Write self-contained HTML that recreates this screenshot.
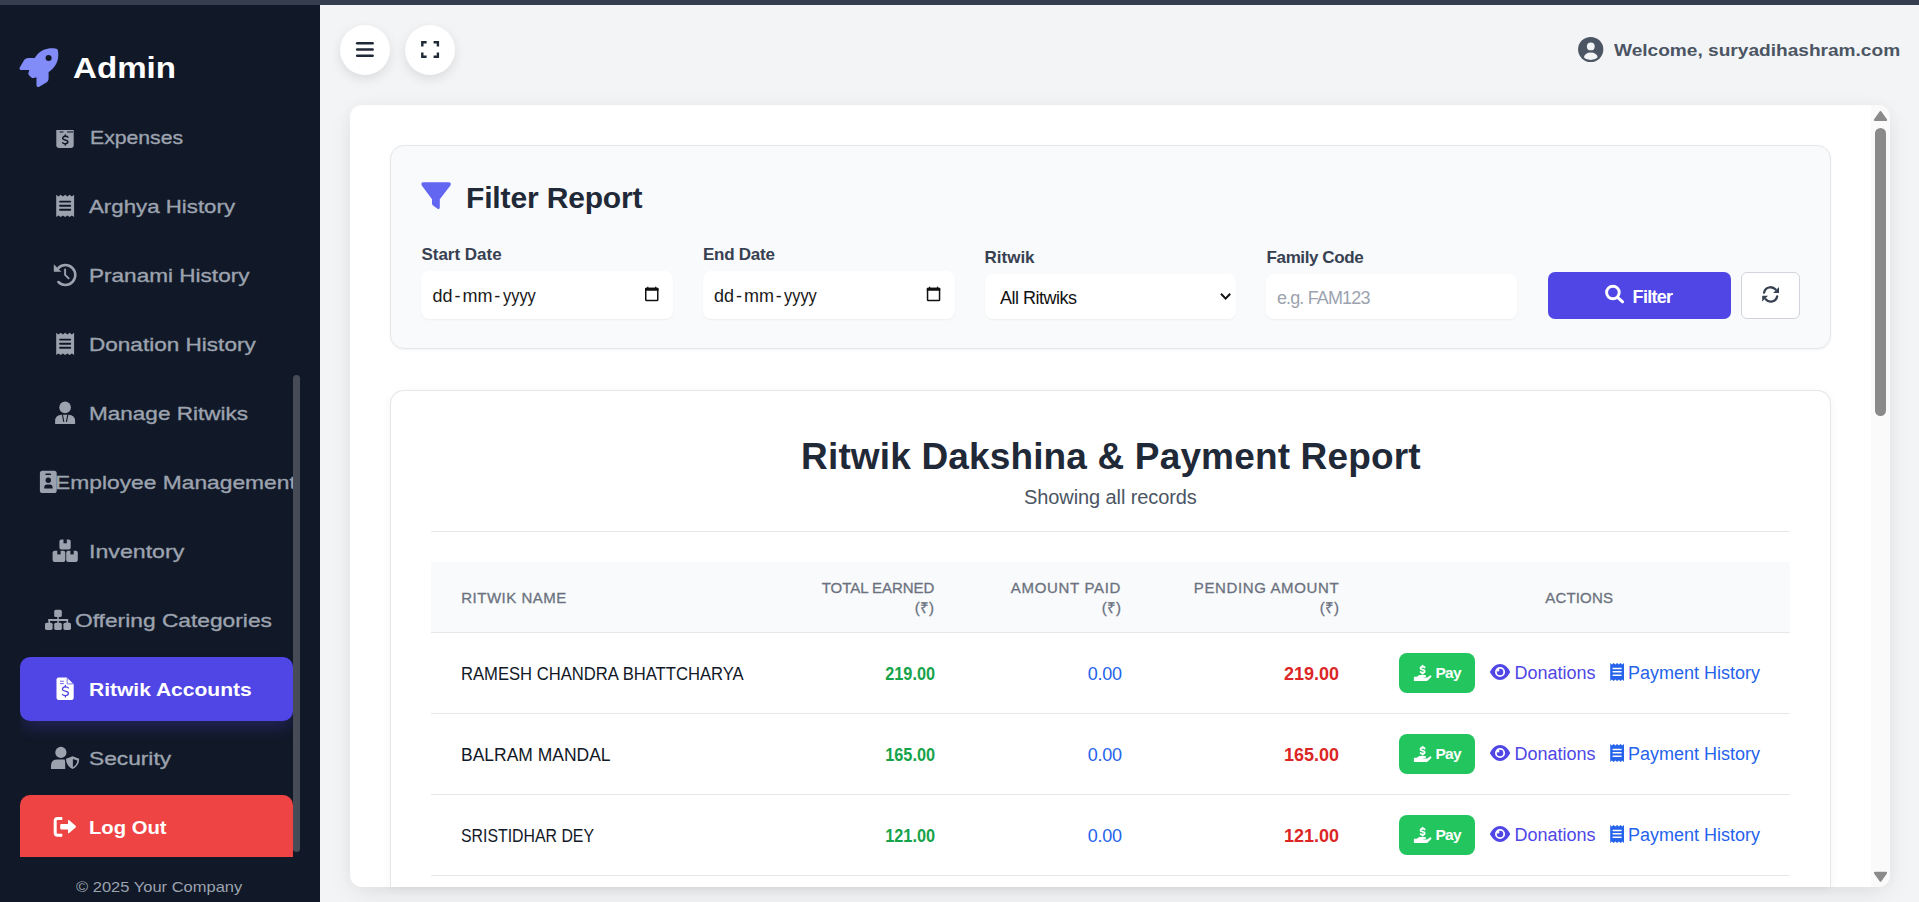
<!DOCTYPE html>
<html><head><meta charset="utf-8"><style>
html,body{margin:0;padding:0;width:1919px;height:902px;overflow:hidden;background:#f3f4f6}
body{position:relative;font-family:"Liberation Sans",sans-serif}
.t{position:absolute;white-space:nowrap}
.circ{position:absolute;width:50px;height:50px;border-radius:50%;background:#fff;box-shadow:0 4px 12px rgba(0,0,0,.10)}
</style></head><body>
<div style="position:absolute;left:0;top:0;width:1919px;height:5px;background:#353d4e"></div>
<div style="position:absolute;left:0;top:5px;width:320px;height:897px;background:#111827"></div>
<div style="position:absolute;left:320px;top:5px;width:1599px;height:897px;background:#f3f4f6"></div>
<div class="t" style="left:72.6px;top:52.61px;font-size:30px;line-height:30px;font-weight:700;color:#fff;letter-spacing:0px;transform:scaleX(1.104);transform-origin:0 0;">Admin</div>

<div class="t" style="left:89.6px;top:128.12px;font-size:19px;line-height:19px;font-weight:400;color:#9ca3af;letter-spacing:0px;-webkit-text-stroke:0.35px #9ca3af;transform:scaleX(1.116);transform-origin:0 0;">Expenses</div>

<div class="t" style="left:89.4px;top:197.12px;font-size:19px;line-height:19px;font-weight:400;color:#9ca3af;letter-spacing:0px;-webkit-text-stroke:0.35px #9ca3af;transform:scaleX(1.172);transform-origin:0 0;">Arghya History</div>

<div class="t" style="left:89.0px;top:266.12px;font-size:19px;line-height:19px;font-weight:400;color:#9ca3af;letter-spacing:0px;-webkit-text-stroke:0.35px #9ca3af;transform:scaleX(1.1875);transform-origin:0 0;">Pranami History</div>

<div class="t" style="left:89.0px;top:335.12px;font-size:19px;line-height:19px;font-weight:400;color:#9ca3af;letter-spacing:0px;-webkit-text-stroke:0.35px #9ca3af;transform:scaleX(1.187);transform-origin:0 0;">Donation History</div>

<div class="t" style="left:89.0px;top:404.12px;font-size:19px;line-height:19px;font-weight:400;color:#9ca3af;letter-spacing:0px;-webkit-text-stroke:0.35px #9ca3af;transform:scaleX(1.186);transform-origin:0 0;">Manage Ritwiks</div>

<div style="position:absolute;left:0;top:460px;width:293px;height:45px;overflow:hidden">
<div class="t" style="left:55.3px;top:13.12px;font-size:19px;line-height:19px;font-weight:400;color:#9ca3af;letter-spacing:0px;-webkit-text-stroke:0.35px #9ca3af;transform:scaleX(1.2);transform-origin:0 0;">Employee Management</div>

</div>
<div class="t" style="left:89.2px;top:542.12px;font-size:19px;line-height:19px;font-weight:400;color:#9ca3af;letter-spacing:0px;-webkit-text-stroke:0.35px #9ca3af;transform:scaleX(1.219);transform-origin:0 0;">Inventory</div>

<div class="t" style="left:75.0px;top:611.12px;font-size:19px;line-height:19px;font-weight:400;color:#9ca3af;letter-spacing:0px;-webkit-text-stroke:0.35px #9ca3af;transform:scaleX(1.198);transform-origin:0 0;">Offering Categories</div>

<div class="t" style="left:88.8px;top:749.12px;font-size:19px;line-height:19px;font-weight:400;color:#9ca3af;letter-spacing:0px;-webkit-text-stroke:0.35px #9ca3af;transform:scaleX(1.196);transform-origin:0 0;">Security</div>

<div style="position:absolute;left:20px;top:100px;width:273px;height:757px;overflow:hidden"><div style="position:absolute;left:0;top:557px;width:273px;height:64px;background:#4f46e5;border-radius:10px;box-shadow:0 10px 15px -3px rgba(79,70,229,.25)"></div></div>
<div class="t" style="left:89px;top:679.92px;font-size:19px;line-height:19px;font-weight:700;color:#fff;letter-spacing:0px;transform:scaleX(1.106);transform-origin:0 0;">Ritwik Accounts</div>

<div style="position:absolute;left:20px;top:795px;width:273px;height:62px;overflow:hidden"><div style="width:273px;height:80px;background:#ef4444;border-radius:10px"></div></div>
<div class="t" style="left:89px;top:817.92px;font-size:19px;line-height:19px;font-weight:700;color:#fff;letter-spacing:0px;transform:scaleX(1.065);transform-origin:0 0;">Log Out</div>

<div style="position:absolute;left:293px;top:375px;width:7px;height:477px;background:#464b56;border-radius:4px"></div>
<div class="t" style="left:75.8px;top:879.00px;font-size:15px;line-height:15px;font-weight:400;color:#9ca3af;letter-spacing:0px;transform:scaleX(1.1);transform-origin:0 0;">&copy; 2025 Your Company</div>

<div class="circ" style="left:340px;top:25px"></div>
<div class="circ" style="left:405px;top:25px"></div>
<div class="t" style="left:1613.6px;top:41.81px;font-size:17px;line-height:17px;font-weight:700;color:#4b5563;letter-spacing:0px;transform:scaleX(1.123);transform-origin:0 0;">Welcome, suryadihashram.com</div>

<div style="position:absolute;left:350px;top:105px;width:1540px;height:782px;background:#fff;border-radius:12px;box-shadow:0 8px 28px -4px rgba(0,0,0,.09),0 0 14px rgba(0,0,0,.03);overflow:hidden">
<div style="position:absolute;left:1521px;top:0;width:19px;height:782px;background:#fafafa"></div>
<div style="position:absolute;left:1525px;top:23px;width:11px;height:288px;background:#8a8a8a;border-radius:6px"></div>
</div>
<div style="position:absolute;left:390px;top:145px;width:1439px;height:202px;background:#f9fafb;border:1px solid #e5e7eb;border-radius:14px;box-shadow:0 1px 3px rgba(0,0,0,.05)"></div>
<div class="t" style="left:466px;top:182.80px;font-size:30px;line-height:30px;font-weight:700;color:#1f2937;letter-spacing:-0.15px;">Filter Report</div>

<div class="t" style="left:421.4px;top:246.41px;font-size:17px;line-height:17px;font-weight:700;color:#374151;letter-spacing:0px;">Start Date</div>

<div class="t" style="left:703px;top:246.41px;font-size:17px;line-height:17px;font-weight:700;color:#374151;letter-spacing:-0.25px;">End Date</div>

<div class="t" style="left:984.5px;top:248.51px;font-size:17px;line-height:17px;font-weight:700;color:#374151;letter-spacing:0px;">Ritwik</div>

<div class="t" style="left:1266.6px;top:248.51px;font-size:17px;line-height:17px;font-weight:700;color:#374151;letter-spacing:-0.4px;">Family Code</div>

<div style="position:absolute;background:#fff;border-radius:8px;box-shadow:0 1px 2px rgba(0,0,0,.05);left:421px;top:271px;width:252px;height:48px"></div>
<div style="position:absolute;background:#fff;border-radius:8px;box-shadow:0 1px 2px rgba(0,0,0,.05);left:703px;top:271px;width:252px;height:48px"></div>
<div style="position:absolute;background:#fff;border-radius:8px;box-shadow:0 1px 2px rgba(0,0,0,.05);left:985px;top:274px;width:251px;height:45px"></div>
<div style="position:absolute;background:#fff;border-radius:8px;box-shadow:0 1px 2px rgba(0,0,0,.05);left:1266px;top:274px;width:251px;height:45px"></div>
<div class="t" style="left:432.6px;top:286.66px;font-size:18px;line-height:18px;font-weight:400;color:#1a1a1a;letter-spacing:0px;">dd</div>

<div class="t" style="left:454.6px;top:286.66px;font-size:18px;line-height:18px;font-weight:400;color:#1a1a1a;letter-spacing:0px;">-</div>

<div class="t" style="left:462.5px;top:286.66px;font-size:18px;line-height:18px;font-weight:400;color:#1a1a1a;letter-spacing:0px;">mm</div>

<div class="t" style="left:494.3px;top:286.66px;font-size:18px;line-height:18px;font-weight:400;color:#1a1a1a;letter-spacing:0px;">-</div>

<div class="t" style="left:502.8px;top:286.66px;font-size:18px;line-height:18px;font-weight:400;color:#1a1a1a;letter-spacing:0px;transform:scaleX(0.91);transform-origin:0 0;">yyyy</div>

<div class="t" style="left:714.1px;top:286.66px;font-size:18px;line-height:18px;font-weight:400;color:#1a1a1a;letter-spacing:0px;">dd</div>

<div class="t" style="left:736.1px;top:286.66px;font-size:18px;line-height:18px;font-weight:400;color:#1a1a1a;letter-spacing:0px;">-</div>

<div class="t" style="left:744.0px;top:286.66px;font-size:18px;line-height:18px;font-weight:400;color:#1a1a1a;letter-spacing:0px;">mm</div>

<div class="t" style="left:775.8px;top:286.66px;font-size:18px;line-height:18px;font-weight:400;color:#1a1a1a;letter-spacing:0px;">-</div>

<div class="t" style="left:784.3px;top:286.66px;font-size:18px;line-height:18px;font-weight:400;color:#1a1a1a;letter-spacing:0px;transform:scaleX(0.91);transform-origin:0 0;">yyyy</div>

<div class="t" style="left:1000px;top:288.51px;font-size:18px;line-height:18px;font-weight:400;color:#111;letter-spacing:-0.5px;">All Ritwiks</div>

<div class="t" style="left:1276.9px;top:288.51px;font-size:18px;line-height:18px;font-weight:400;color:#9ca3af;letter-spacing:-0.85px;">e.g. FAM123</div>

<div style="position:absolute;left:1548px;top:272px;width:183px;height:47px;background:#4f46e5;border-radius:7px"></div>
<div class="t" style="left:1632.6px;top:287.76px;font-size:18px;line-height:18px;font-weight:700;color:#fff;letter-spacing:-0.7px;">Filter</div>

<div style="position:absolute;left:1741px;top:272px;width:57px;height:45px;background:#fff;border:1px solid #d1d5db;border-radius:6px"></div>
<div style="position:absolute;left:390px;top:390px;width:1441px;height:497px;box-sizing:border-box;background:#fff;border:1px solid #e5e7eb;border-bottom:none;border-radius:14px 14px 0 0;box-shadow:0 2px 10px rgba(0,0,0,.05)"></div>
<div class="t" style="left:510.9000000000001px;width:1200px;text-align:center;top:437.68px;font-size:37px;line-height:37px;font-weight:700;color:#1f2937;letter-spacing:0.15px;">Ritwik Dakshina &amp; Payment Report</div>

<div class="t" style="left:510.4000000000001px;width:1200px;text-align:center;top:487.27px;font-size:20px;line-height:20px;font-weight:400;color:#4b5563;letter-spacing:-0.1px;">Showing all records</div>

<div style="position:absolute;left:431px;top:531px;width:1359px;height:1px;background:#e5e7eb"></div>
<div style="position:absolute;left:431px;top:562px;width:1359px;height:70px;background:#f9fafb;border-bottom:1px solid #e5e7eb"></div>
<div class="t" style="left:461.2px;top:590.20px;font-size:15px;line-height:15px;font-weight:400;color:#6b7280;letter-spacing:0.51px;-webkit-text-stroke:0.3px #6b7280;">RITWIK NAME</div>

<div class="t" style="right:984.8px;top:579.90px;font-size:15px;line-height:15px;font-weight:400;color:#6b7280;letter-spacing:-0.05px;-webkit-text-stroke:0.3px #6b7280;">TOTAL EARNED</div>

<div class="t" style="right:985.0px;top:599.50px;font-size:15px;line-height:15px;font-weight:400;color:#6b7280;letter-spacing:0.1px;-webkit-text-stroke:0.3px #6b7280;">(&#8377;)</div>

<div class="t" style="right:797.9000000000001px;top:579.90px;font-size:15px;line-height:15px;font-weight:400;color:#6b7280;letter-spacing:0.68px;-webkit-text-stroke:0.3px #6b7280;">AMOUNT PAID</div>

<div class="t" style="right:798.0px;top:599.50px;font-size:15px;line-height:15px;font-weight:400;color:#6b7280;letter-spacing:0.1px;-webkit-text-stroke:0.3px #6b7280;">(&#8377;)</div>

<div class="t" style="right:579.8px;top:579.90px;font-size:15px;line-height:15px;font-weight:400;color:#6b7280;letter-spacing:0.62px;-webkit-text-stroke:0.3px #6b7280;">PENDING AMOUNT</div>

<div class="t" style="right:580.0px;top:599.50px;font-size:15px;line-height:15px;font-weight:400;color:#6b7280;letter-spacing:0.1px;-webkit-text-stroke:0.3px #6b7280;">(&#8377;)</div>

<div class="t" style="left:979.2px;width:1200px;text-align:center;top:589.90px;font-size:15px;line-height:15px;font-weight:400;color:#6b7280;letter-spacing:0.17px;-webkit-text-stroke:0.3px #6b7280;">ACTIONS</div>

<div style="position:absolute;left:431px;top:713px;width:1359px;height:1px;background:#e5e7eb"></div>
<div class="t" style="left:461.0px;top:664.76px;font-size:18px;line-height:18px;font-weight:400;color:#111827;letter-spacing:0px;transform:scaleX(0.9235);transform-origin:0 0;">RAMESH CHANDRA BHATTCHARYA</div>

<div class="t" style="right:984px;top:664.76px;font-size:18px;line-height:18px;font-weight:700;color:#16a34a;letter-spacing:0px;transform:scaleX(0.905);transform-origin:100% 0;">219.00</div>

<div class="t" style="right:797.4000000000001px;top:664.76px;font-size:18px;line-height:18px;font-weight:400;color:#2563eb;letter-spacing:-0.3px;">0.00</div>

<div class="t" style="right:580px;top:664.76px;font-size:18px;line-height:18px;font-weight:700;color:#dc2626;letter-spacing:0px;">219.00</div>

<div style="position:absolute;left:1399px;top:653px;width:76px;height:40px;background:#22c55e;border-radius:8px"></div>
<div class="t" style="left:1435.5px;top:665.48px;font-size:15.5px;line-height:15.5px;font-weight:700;color:#fff;letter-spacing:-0.75px;">Pay</div>

<div class="t" style="left:1514.4px;top:663.51px;font-size:18px;line-height:18px;font-weight:400;color:#4f46e5;letter-spacing:0px;">Donations</div>

<div class="t" style="left:1628px;top:663.51px;font-size:18px;line-height:18px;font-weight:400;color:#2563eb;letter-spacing:0px;">Payment History</div>

<div style="position:absolute;left:431px;top:794px;width:1359px;height:1px;background:#e5e7eb"></div>
<div class="t" style="left:461.0px;top:746.06px;font-size:18px;line-height:18px;font-weight:400;color:#111827;letter-spacing:0px;transform:scaleX(0.9707);transform-origin:0 0;">BALRAM MANDAL</div>

<div class="t" style="right:984px;top:745.76px;font-size:18px;line-height:18px;font-weight:700;color:#16a34a;letter-spacing:0px;transform:scaleX(0.905);transform-origin:100% 0;">165.00</div>

<div class="t" style="right:797.4000000000001px;top:745.76px;font-size:18px;line-height:18px;font-weight:400;color:#2563eb;letter-spacing:-0.3px;">0.00</div>

<div class="t" style="right:580px;top:745.76px;font-size:18px;line-height:18px;font-weight:700;color:#dc2626;letter-spacing:0px;">165.00</div>

<div style="position:absolute;left:1399px;top:734px;width:76px;height:40px;background:#22c55e;border-radius:8px"></div>
<div class="t" style="left:1435.5px;top:746.48px;font-size:15.5px;line-height:15.5px;font-weight:700;color:#fff;letter-spacing:-0.75px;">Pay</div>

<div class="t" style="left:1514.4px;top:744.51px;font-size:18px;line-height:18px;font-weight:400;color:#4f46e5;letter-spacing:0px;">Donations</div>

<div class="t" style="left:1628px;top:744.51px;font-size:18px;line-height:18px;font-weight:400;color:#2563eb;letter-spacing:0px;">Payment History</div>

<div style="position:absolute;left:431px;top:875px;width:1359px;height:1px;background:#e5e7eb"></div>
<div class="t" style="left:461.0px;top:826.56px;font-size:18px;line-height:18px;font-weight:400;color:#111827;letter-spacing:0px;transform:scaleX(0.8806);transform-origin:0 0;">SRISTIDHAR DEY</div>

<div class="t" style="right:984px;top:826.76px;font-size:18px;line-height:18px;font-weight:700;color:#16a34a;letter-spacing:0px;transform:scaleX(0.905);transform-origin:100% 0;">121.00</div>

<div class="t" style="right:797.4000000000001px;top:826.76px;font-size:18px;line-height:18px;font-weight:400;color:#2563eb;letter-spacing:-0.3px;">0.00</div>

<div class="t" style="right:580px;top:826.76px;font-size:18px;line-height:18px;font-weight:700;color:#dc2626;letter-spacing:0px;">121.00</div>

<div style="position:absolute;left:1399px;top:815px;width:76px;height:40px;background:#22c55e;border-radius:8px"></div>
<div class="t" style="left:1435.5px;top:827.48px;font-size:15.5px;line-height:15.5px;font-weight:700;color:#fff;letter-spacing:-0.75px;">Pay</div>

<div class="t" style="left:1514.4px;top:825.51px;font-size:18px;line-height:18px;font-weight:400;color:#4f46e5;letter-spacing:0px;">Donations</div>

<div class="t" style="left:1628px;top:825.51px;font-size:18px;line-height:18px;font-weight:400;color:#2563eb;letter-spacing:0px;">Payment History</div>

<div style="position:absolute;left:1871px;top:105px;width:19px;height:782px;background:#fafafa;border-radius:0 12px 12px 0"></div>
<div style="position:absolute;left:1875px;top:128px;width:11px;height:288px;background:#8a8a8a;border-radius:6px"></div>
<svg style="position:absolute;left:0;top:0" width="1919" height="902" viewBox="0 0 1919 902"><g transform="translate(19.5,48.3) scale(0.07578)"><path d="M156.6 384.9L125.7 354c-8.5-8.5-11.5-20.8-7.7-32.2c3-8.9 7-20.5 11.8-33.8L24 288c-8.6 0-16.6-4.6-20.9-12.1s-4.2-16.7 .2-24.1l52.5-88.5c13-21.9 36.5-35.3 61.9-35.3l82.3 0c2.4-4 4.8-7.7 7.2-11.3C289.1-4.1 411.1-8.1 483.9 5.3c11.6 2.1 20.6 11.2 22.8 22.8c13.4 72.9 9.3 194.8-111.4 276.7c-3.5 2.4-7.3 4.8-11.3 7.2v82.3c0 25.4-13.4 49-35.3 61.9l-88.5 52.5c-7.4 4.4-16.6 4.5-24.1 .2s-12.1-12.2-12.1-20.9V380.8c-14.1 4.9-26.4 8.9-35.7 11.9c-11.2 3.6-23.4 .5-31.8-7.8zM384 168a40 40 0 1 0 0-80 40 40 0 1 0 0 80z" fill="#818cf8"/></g><path d="M56.3,130 L73.7,130 L73.7,145.5 Q73.7,147.9 71.3,147.9 L58.7,147.9 Q56.3,147.9 56.3,145.5 Z" fill="#9ca3af"/><rect x="59.6" y="131.2" width="3.8" height="1.5" fill="#3a4050"/><rect x="67" y="131.2" width="6.2" height="1.5" fill="#3a4050"/><path d="M67.90,137.20 C67.60,136.40 66.08,136.20 65.30,136.20 C63.48,136.20 62.70,137.50 62.70,138.60 C62.70,140.20 67.90,139.80 67.90,141.60 C67.90,142.70 67.12,143.80 65.30,143.80 C64.52,143.80 63.00,143.60 62.70,142.80" fill="none" stroke="#111827" stroke-width="1.5" stroke-linecap="round"/><line x1="65.30" y1="135.00" x2="65.30" y2="136.20" stroke="#111827" stroke-width="1.5" stroke-linecap="round"/><line x1="65.30" y1="143.80" x2="65.30" y2="145.00" stroke="#111827" stroke-width="1.5" stroke-linecap="round"/><path d="M56.2,194.8 L58.44,196.40 L60.68,194.8 L62.91,196.40 L65.15,194.8 L67.39,196.40 L69.62,194.8 L71.86,196.40 L74.10,194.8 L74.1,217.0 L71.86,215.40 L69.62,217.0 L67.39,215.40 L65.15,217.0 L62.91,215.40 L60.67,217.0 L58.44,215.40 L56.20,217.0 Z" fill="#9ca3af"/><line x1="60.05" y1="201.57" x2="70.25" y2="201.57" stroke="#111827" stroke-width="1.89" stroke-linecap="round"/><line x1="60.05" y1="205.68" x2="70.25" y2="205.68" stroke="#111827" stroke-width="1.89" stroke-linecap="round"/><line x1="60.05" y1="209.79" x2="70.25" y2="209.79" stroke="#111827" stroke-width="1.89" stroke-linecap="round"/><path d="M56.2,332.8 L58.44,334.40 L60.68,332.8 L62.91,334.40 L65.15,332.8 L67.39,334.40 L69.62,332.8 L71.86,334.40 L74.10,332.8 L74.1,355.0 L71.86,353.40 L69.62,355.0 L67.39,353.40 L65.15,355.0 L62.91,353.40 L60.67,355.0 L58.44,353.40 L56.20,355.0 Z" fill="#9ca3af"/><line x1="60.05" y1="339.57" x2="70.25" y2="339.57" stroke="#111827" stroke-width="1.89" stroke-linecap="round"/><line x1="60.05" y1="343.68" x2="70.25" y2="343.68" stroke="#111827" stroke-width="1.89" stroke-linecap="round"/><line x1="60.05" y1="347.79" x2="70.25" y2="347.79" stroke="#111827" stroke-width="1.89" stroke-linecap="round"/><path d="M58.4,268.0 A9.9,9.9 0 1 1 58.4,282.0" fill="none" stroke="#9ca3af" stroke-width="2.5" stroke-linecap="round"/><path d="M53.8,264.3 L53.8,271.8 L61.3,271.8 Z" fill="#9ca3af"/><path d="M65.1,269.5 L65.1,274.8 L68.6,278.3" fill="none" stroke="#9ca3af" stroke-width="1.9" stroke-linecap="round" stroke-linejoin="round"/><circle cx="65.1" cy="407.4" r="5.8" fill="#9ca3af"/><path d="M55.1,424.1 L55.1,421.5 Q55.1,414.8 61.8,414.8 L68.4,414.8 Q75.1,414.8 75.1,421.5 L75.1,424.1 Z" fill="#9ca3af"/><path d="M62.4,414.6 L63.8,421.8 M67.8,414.6 L66.4,421.8" stroke="#111827" stroke-width="1.1"/><rect x="39.9" y="470.8" width="16.8" height="22.2" rx="2.6" fill="#9ca3af"/><rect x="45.4" y="473.6" width="5.6" height="1.4" rx="0.6" fill="#111827"/><circle cx="48.3" cy="480.2" r="2.7" fill="#111827"/><path d="M44.2,488.6 L44.2,487.8 Q44.2,484.6 47.2,484.6 L49.6,484.6 Q52.6,484.6 52.6,487.8 L52.6,488.6 Z" fill="#111827"/><rect x="59.4" y="539.6" width="11.3" height="9.9" rx="2" fill="#9ca3af"/><rect x="63.5" y="539.1" width="3.3" height="4.2" fill="#111827"/><rect x="52.6" y="550.7" width="12.7" height="11.3" rx="2" fill="#9ca3af"/><rect x="57.3" y="550.2" width="3.3" height="4.2" fill="#111827"/><rect x="66.2" y="550.7" width="11.6" height="11.3" rx="2" fill="#9ca3af"/><rect x="70.4" y="550.2" width="3.3" height="4.2" fill="#111827"/><rect x="54.2" y="609.7" width="7.6" height="7.4" rx="1.6" fill="#9ca3af"/><rect x="57.3" y="617" width="1.5" height="6" fill="#9ca3af"/><rect x="48.4" y="619" width="19.7" height="2" fill="#9ca3af"/><rect x="48.4" y="619" width="1.6" height="4" fill="#9ca3af"/><rect x="66.5" y="619" width="1.6" height="4" fill="#9ca3af"/><rect x="45.0" y="622.7" width="7.6" height="7.2" rx="1.6" fill="#9ca3af"/><rect x="54.2" y="622.7" width="7.6" height="7.2" rx="1.6" fill="#9ca3af"/><rect x="63.4" y="622.7" width="7.6" height="7.2" rx="1.6" fill="#9ca3af"/><path d="M56.5,679.6 Q56.5,677.4 58.7,677.4 L66.8,677.4 L73.7,684.2 L73.7,697.8 Q73.7,700 71.5,700 L58.7,700 Q56.5,700 56.5,697.8 Z" fill="#fff"/><path d="M67.2,677.6 L67.2,683.9 L73.5,683.9" fill="none" stroke="#6c63ec" stroke-width="0.9"/><rect x="60" y="680.7" width="3.8" height="1.1" fill="#7b74ee"/><rect x="60" y="683" width="3.8" height="1.1" fill="#7b74ee"/><path d="M68.39,687.98 C68.09,687.06 66.30,686.83 65.40,686.83 C63.31,686.83 62.41,688.33 62.41,689.59 C62.41,691.43 68.39,690.97 68.39,693.04 C68.39,694.31 67.49,695.57 65.40,695.57 C64.50,695.57 62.71,695.34 62.41,694.42" fill="none" stroke="#4f46e5" stroke-width="1.3" stroke-linecap="round"/><line x1="65.40" y1="685.45" x2="65.40" y2="686.83" stroke="#4f46e5" stroke-width="1.3" stroke-linecap="round"/><line x1="65.40" y1="695.57" x2="65.40" y2="696.95" stroke="#4f46e5" stroke-width="1.3" stroke-linecap="round"/><circle cx="60.9" cy="752.4" r="5.6" fill="#9ca3af"/><path d="M51,769 L51,766 Q51,759.6 57.4,759.6 L65.2,759.6 L65.2,769 Z" fill="#9ca3af"/><path d="M72.6,755.2 L80.5,758.2 Q80.5,766.5 72.6,770.2 Q64.7,766.5 64.7,758.2 Z" fill="#111827"/><path d="M72.6,756.3 L79.2,758.8 Q79.2,765.8 72.6,769 Q66,765.8 66,758.8 Z" fill="#9ca3af"/><path d="M72.9,758.9 L77.3,760.4 Q77.1,765 72.9,767.3 Z" fill="#111827"/><path d="M62.3,818.4 L57.6,818.4 Q55.2,818.4 55.2,820.8 L55.2,832.8 Q55.2,835.2 57.6,835.2 L62.3,835.2" fill="none" stroke="#fff" stroke-width="3" stroke-linecap="butt" stroke-linejoin="round"/><path d="M61.4,824.1 L68,824.1 L68,820.8 Q68,819.4 69.2,820.3 L75.6,825.8 Q76.4,826.6 75.6,827.4 L69.2,832.9 Q68,833.8 68,832.4 L68,829.5 L61.4,829.5 Q60.2,829.5 60.2,828.3 L60.2,825.3 Q60.2,824.1 61.4,824.1 Z" fill="#fff"/><line x1="357.2" y1="43.3" x2="372.6" y2="43.3" stroke="#1f2937" stroke-width="2.6" stroke-linecap="round"/><line x1="357.2" y1="49.5" x2="372.6" y2="49.5" stroke="#1f2937" stroke-width="2.6" stroke-linecap="round"/><line x1="357.2" y1="55.7" x2="372.6" y2="55.7" stroke="#1f2937" stroke-width="2.6" stroke-linecap="round"/><path d="M422.3,46.5 L422.3,42.2 L426.6,42.2 M433.6,42.2 L437.9,42.2 L437.9,46.5 M437.9,52.4 L437.9,56.7 L433.6,56.7 M426.6,56.7 L422.3,56.7 L422.3,52.4" fill="none" stroke="#1f2937" stroke-width="2.4"/><circle cx="1590.7" cy="49.5" r="12.6" fill="#4b5563"/><circle cx="1590.8" cy="46.4" r="3.9" fill="#f3f4f6"/><clipPath id="uc"><circle cx="1590.7" cy="49.5" r="10.6"/></clipPath><ellipse cx="1590.8" cy="57.2" rx="6.8" ry="4.6" fill="#f3f4f6" clip-path="url(#uc)"/><path d="M423.5,182.3 L448.7,182.3 Q451.8,182.6 450.4,185.6 L439.8,199.3 L439.8,207.4 Q439.4,209.8 437.2,208.4 L433,205.4 Q432,204.6 432,203.4 L432,199.3 L421.8,185.6 Q420.4,182.6 423.5,182.3 Z" fill="#6366f1"/><circle cx="1612.9" cy="292.5" r="6.3" fill="none" stroke="#fff" stroke-width="2.9"/><line x1="1617.6" y1="297.3" x2="1622.6" y2="301.8" stroke="#fff" stroke-width="3" stroke-linecap="round"/><path d="M1764.1,292.6 A6.6,6.6 0 0 1 1775.6,289.6" fill="none" stroke="#374151" stroke-width="2.3" stroke-linecap="round"/><path d="M1779,287.1 L1779,292.9 L1773.2,292.9 Z" fill="#374151"/><path d="M1777.2,296.3 A6.6,6.6 0 0 1 1765.7,299.3" fill="none" stroke="#374151" stroke-width="2.3" stroke-linecap="round"/><path d="M1762.2,301.6 L1762.2,295.7 L1768,295.7 Z" fill="#374151"/><rect x="645.75" y="288.5" width="12" height="12" rx="0.8" fill="none" stroke="#111" stroke-width="1.5"/><rect x="645.0" y="287.8" width="13.5" height="3.0" rx="0.6" fill="#111"/><rect x="647.2" y="286.7" width="1.2" height="2" fill="#111"/><rect x="655.1" y="286.7" width="1.2" height="2" fill="#111"/><rect x="927.55" y="288.5" width="12" height="12" rx="0.8" fill="none" stroke="#111" stroke-width="1.5"/><rect x="926.8" y="287.8" width="13.5" height="3.0" rx="0.6" fill="#111"/><rect x="929.0" y="286.7" width="1.2" height="2" fill="#111"/><rect x="936.9" y="286.7" width="1.2" height="2" fill="#111"/><path d="M1221,293.8 L1225.6,298.6 L1230.2,293.8" fill="none" stroke="#111" stroke-width="2"/><path d="M1880.5,112.2 L1886,120 L1875,120 Z" fill="#8a8a8a" stroke="#8a8a8a" stroke-width="2.2" stroke-linejoin="round"/><path d="M1880.5,880.6 L1886,872.8 L1875,872.8 Z" fill="#8a8a8a" stroke="#8a8a8a" stroke-width="2.2" stroke-linejoin="round"/><path d="M1424.68,667.46 C1424.38,666.82 1423.22,666.66 1422.60,666.66 C1421.14,666.66 1420.52,667.70 1420.52,668.58 C1420.52,669.86 1424.68,669.54 1424.68,670.98 C1424.68,671.86 1424.06,672.74 1422.60,672.74 C1421.98,672.74 1420.82,672.58 1420.52,671.94" fill="none" stroke="#fff" stroke-width="1.8" stroke-linecap="round"/><line x1="1422.60" y1="665.70" x2="1422.60" y2="666.66" stroke="#fff" stroke-width="1.8" stroke-linecap="round"/><line x1="1422.60" y1="672.74" x2="1422.60" y2="673.70" stroke="#fff" stroke-width="1.8" stroke-linecap="round"/><path d="M1413.9,676.7 L1416.7,676.7 L1419.3,675.1 L1425.3,675.1 Q1426.6,675.6 1425.6,677.1 L1421.9,677.6 L1427.3,677.6 L1429.9,675.4 Q1431.9,675.0 1431.3,676.9 L1427.1,680.9 L1413.9,680.9 Z" fill="#fff"/><path d="M1489.9,672.05 C1492.4,667.05 1496,664.0999999999999 1500.05,664.0999999999999 C1504.1,664.0999999999999 1507.7,667.05 1510.2,672.05 C1507.7,677.05 1504.1,680.0 1500.05,680.0 C1496,680.0 1492.4,677.05 1489.9,672.05 Z" fill="#4f46e5"/><circle cx="1500.05" cy="672.05" r="4.15" fill="none" stroke="#fff" stroke-width="1.8"/><circle cx="1497.9" cy="669.9499999999999" r="1.5" fill="#fff"/><path d="M1610.2,663 L1611.92,664.60 L1613.65,663 L1615.38,664.60 L1617.10,663 L1618.83,664.60 L1620.55,663 L1622.28,664.60 L1624.00,663 L1624.0,681 L1622.28,679.40 L1620.55,681 L1618.83,679.40 L1617.10,681 L1615.38,679.40 L1613.65,681 L1611.92,679.40 L1610.20,681 Z" fill="#2563eb"/><line x1="1613.17" y1="668.49" x2="1621.03" y2="668.49" stroke="#fff" stroke-width="1.53" stroke-linecap="round"/><line x1="1613.17" y1="671.82" x2="1621.03" y2="671.82" stroke="#fff" stroke-width="1.53" stroke-linecap="round"/><line x1="1613.17" y1="675.15" x2="1621.03" y2="675.15" stroke="#fff" stroke-width="1.53" stroke-linecap="round"/><path d="M1424.68,748.46 C1424.38,747.82 1423.22,747.66 1422.60,747.66 C1421.14,747.66 1420.52,748.70 1420.52,749.58 C1420.52,750.86 1424.68,750.54 1424.68,751.98 C1424.68,752.86 1424.06,753.74 1422.60,753.74 C1421.98,753.74 1420.82,753.58 1420.52,752.94" fill="none" stroke="#fff" stroke-width="1.8" stroke-linecap="round"/><line x1="1422.60" y1="746.70" x2="1422.60" y2="747.66" stroke="#fff" stroke-width="1.8" stroke-linecap="round"/><line x1="1422.60" y1="753.74" x2="1422.60" y2="754.70" stroke="#fff" stroke-width="1.8" stroke-linecap="round"/><path d="M1413.9,757.7 L1416.7,757.7 L1419.3,756.1 L1425.3,756.1 Q1426.6,756.6 1425.6,758.1 L1421.9,758.6 L1427.3,758.6 L1429.9,756.4 Q1431.9,756.0 1431.3,757.9 L1427.1,761.9 L1413.9,761.9 Z" fill="#fff"/><path d="M1489.9,753.05 C1492.4,748.05 1496,745.0999999999999 1500.05,745.0999999999999 C1504.1,745.0999999999999 1507.7,748.05 1510.2,753.05 C1507.7,758.05 1504.1,761.0 1500.05,761.0 C1496,761.0 1492.4,758.05 1489.9,753.05 Z" fill="#4f46e5"/><circle cx="1500.05" cy="753.05" r="4.15" fill="none" stroke="#fff" stroke-width="1.8"/><circle cx="1497.9" cy="750.9499999999999" r="1.5" fill="#fff"/><path d="M1610.2,744 L1611.92,745.60 L1613.65,744 L1615.38,745.60 L1617.10,744 L1618.83,745.60 L1620.55,744 L1622.28,745.60 L1624.00,744 L1624.0,762 L1622.28,760.40 L1620.55,762 L1618.83,760.40 L1617.10,762 L1615.38,760.40 L1613.65,762 L1611.92,760.40 L1610.20,762 Z" fill="#2563eb"/><line x1="1613.17" y1="749.49" x2="1621.03" y2="749.49" stroke="#fff" stroke-width="1.53" stroke-linecap="round"/><line x1="1613.17" y1="752.82" x2="1621.03" y2="752.82" stroke="#fff" stroke-width="1.53" stroke-linecap="round"/><line x1="1613.17" y1="756.15" x2="1621.03" y2="756.15" stroke="#fff" stroke-width="1.53" stroke-linecap="round"/><path d="M1424.68,829.46 C1424.38,828.82 1423.22,828.66 1422.60,828.66 C1421.14,828.66 1420.52,829.70 1420.52,830.58 C1420.52,831.86 1424.68,831.54 1424.68,832.98 C1424.68,833.86 1424.06,834.74 1422.60,834.74 C1421.98,834.74 1420.82,834.58 1420.52,833.94" fill="none" stroke="#fff" stroke-width="1.8" stroke-linecap="round"/><line x1="1422.60" y1="827.70" x2="1422.60" y2="828.66" stroke="#fff" stroke-width="1.8" stroke-linecap="round"/><line x1="1422.60" y1="834.74" x2="1422.60" y2="835.70" stroke="#fff" stroke-width="1.8" stroke-linecap="round"/><path d="M1413.9,838.7 L1416.7,838.7 L1419.3,837.1 L1425.3,837.1 Q1426.6,837.6 1425.6,839.1 L1421.9,839.6 L1427.3,839.6 L1429.9,837.4 Q1431.9,837.0 1431.3,838.9 L1427.1,842.9 L1413.9,842.9 Z" fill="#fff"/><path d="M1489.9,834.05 C1492.4,829.05 1496,826.0999999999999 1500.05,826.0999999999999 C1504.1,826.0999999999999 1507.7,829.05 1510.2,834.05 C1507.7,839.05 1504.1,842.0 1500.05,842.0 C1496,842.0 1492.4,839.05 1489.9,834.05 Z" fill="#4f46e5"/><circle cx="1500.05" cy="834.05" r="4.15" fill="none" stroke="#fff" stroke-width="1.8"/><circle cx="1497.9" cy="831.9499999999999" r="1.5" fill="#fff"/><path d="M1610.2,825 L1611.92,826.60 L1613.65,825 L1615.38,826.60 L1617.10,825 L1618.83,826.60 L1620.55,825 L1622.28,826.60 L1624.00,825 L1624.0,843 L1622.28,841.40 L1620.55,843 L1618.83,841.40 L1617.10,843 L1615.38,841.40 L1613.65,843 L1611.92,841.40 L1610.20,843 Z" fill="#2563eb"/><line x1="1613.17" y1="830.49" x2="1621.03" y2="830.49" stroke="#fff" stroke-width="1.53" stroke-linecap="round"/><line x1="1613.17" y1="833.82" x2="1621.03" y2="833.82" stroke="#fff" stroke-width="1.53" stroke-linecap="round"/><line x1="1613.17" y1="837.15" x2="1621.03" y2="837.15" stroke="#fff" stroke-width="1.53" stroke-linecap="round"/></svg>
</body></html>
